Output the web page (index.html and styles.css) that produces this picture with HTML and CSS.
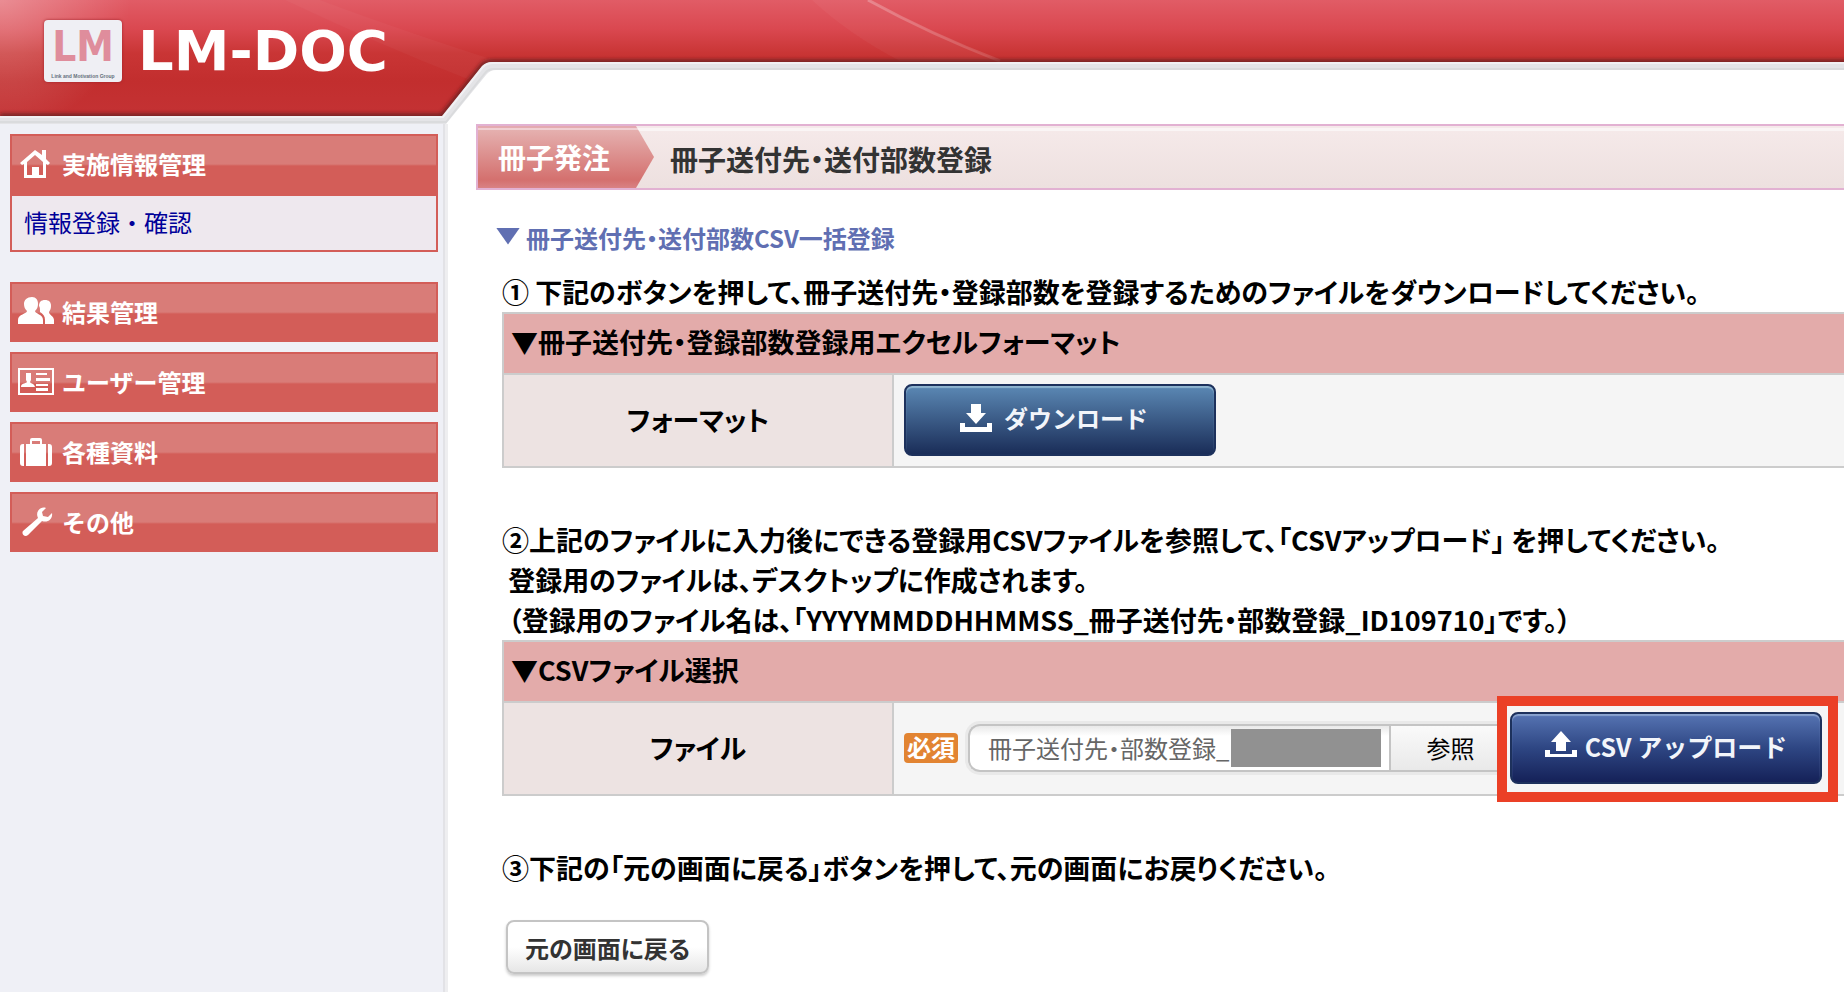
FILE: index.html
```html
<!DOCTYPE html>
<html lang="ja">
<head>
    <meta charset="UTF-8">
    <meta name="viewport" content="width=device-width, initial-scale=1.0">
    <title>冊子送付先・送付部数登録 | LM-DOC</title>
    <link rel="stylesheet" href="styles.css">
</head>
<body>
    <header class="header">
        <svg class="header-bg" aria-hidden="true">
            <defs>
                <linearGradient id="red" x1="0" y1="0" x2="0" y2="116" gradientUnits="userSpaceOnUse">
                    <stop offset="0" stop-color="#e15c66"/>
                    <stop offset="0.25" stop-color="#da4850"/>
                    <stop offset="0.46" stop-color="#c93535"/>
                    <stop offset="0.7" stop-color="#c22e2e"/>
                    <stop offset="1" stop-color="#c43234"/>
                </linearGradient>
                <radialGradient id="shine" cx="0" cy="0" r="130" gradientUnits="userSpaceOnUse">
                    <stop offset="0" stop-color="#fff" stop-opacity="0.3"/>
                    <stop offset="1" stop-color="#fff" stop-opacity="0"/>
                </radialGradient>
                <linearGradient id="streak" x1="868" y1="0" x2="1000" y2="61" gradientUnits="userSpaceOnUse">
                    <stop offset="0" stop-color="#fff" stop-opacity="0.25"/>
                    <stop offset="1" stop-color="#fff" stop-opacity="0.12"/>
                </linearGradient>
                <filter id="soft" x="-5%" y="-20%" width="110%" height="140%">
                    <feGaussianBlur stdDeviation="2"/>
                </filter>
            </defs>
            <rect width="100%" height="124" fill="url(#red)"/>
            <rect width="140" height="124" fill="url(#shine)"/>
            <path d="M285 0Q380 45 470 80L500 62Q400 30 320 0Z" fill="#fff" opacity="0.03"/>
            <path d="M812 0Q850 35 900 61H1000Q930 32 868 0Z" fill="#fff" opacity="0.04"/>
            <path d="M868 0Q930 34 1000 61" fill="none" stroke="url(#streak)" stroke-width="3"/>
            <path d="M0 116H442L482 66Q486 62 492 62H4000" fill="none" stroke="#5c1a1e" stroke-width="4" filter="url(#soft)"/>
            <path d="M0 116H442L482 66Q486 62 492 62H4000V124H0Z" fill="#e4e4e7"/>
            <path d="M0 117H443L483 67Q487 63 493 63H4000" fill="none" stroke="#f1f0f3" stroke-width="2"/>
            <path d="M0 122H446L485 73Q488 69 494 69H4000" fill="none" stroke="#dadbdd" stroke-width="2"/>
            <path d="M446 124L486 75Q490 70 496 70H4000V124Z" fill="#fff"/>
        </svg>
        <a class="logo" href="#">
            <span class="logo-mark">
                <span class="logo-initials">LM</span>
                <span class="logo-caption">Link and Motivation Group</span>
            </span>
            <span class="logo-name">LM-DOC</span>
        </a>
    </header>

    <div class="wrapper">
        <nav class="sidebar">
            <div class="menu-group">
                <a class="menu-title" href="#">
                    <svg class="menu-icon" viewBox="0 0 36 30"><path d="M17 1L2 14l2 2 2-1v14h22V15l2 1 2-2-4-4V1h-4v5ZM17 6l8 7v13h-4v-8h-7v8H9V13Z" fill="#fff" fill-rule="evenodd"/></svg>
                    実施情報管理
                </a>
                <a class="menu-sub" href="#">情報登録・確認</a>
            </div>
            <a class="menu-title" href="#">
                <svg class="menu-icon" viewBox="0 0 36 30"><path d="M14 0c4 0 6 3 6 7 0 3-1 5-3 7 0 3 8 3 8 9v4H0v-4c0-6 9-6 9-9-2-2-3-4-3-7 0-4 3-7 8-7ZM27 3c4 0 6 2 6 6 0 3-1 4-2 6 0 3 5 4 5 8v4h-9v-4c0-4-2-6-5-8 0-3 0-5-1-6 0-4 2-6 6-6Z" fill="#fff"/></svg>
                結果管理
            </a>
            <a class="menu-title" href="#">
                <svg class="menu-icon" viewBox="0 0 36 30"><path d="M1 2h34v25H1Z" fill="none" stroke="#fff" stroke-width="2"/><path d="M8 6h5v7l-1 2c1 2 4 1 5 5H3c0-4 4-3 6-5l-1-2V6ZM18 6h11v2H18Zm0 5h14v3H18Zm0 6h12v2H18Zm0 4h12v3H18Z" fill="#fff"/></svg>
                ユーザー管理
            </a>
            <a class="menu-title" href="#">
                <svg class="menu-icon" viewBox="0 0 36 30"><path d="M8 7h4V3q0-2 2-2h8q2 0 2 2v4h4v22H8ZM14 4v3h8V4ZM6 7v22H5q-3 0-3-3V10q0-3 3-3ZM30 7h1q3 0 3 3v16q0 3-3 3h-1Z" fill="#fff" fill-rule="evenodd"/></svg>
                各種資料
            </a>
            <a class="menu-title" href="#">
                <svg class="menu-icon" viewBox="0 0 36 30"><path d="M28 1c-6-2-11 4-8 10L5 24c-2 3 2 7 5 4l14-14c6 2 11-2 10-8l-4 4-5-1-1-4Z" fill="#fff"/></svg>
                その他
            </a>
        </nav>

        <main class="content">
            <div class="page-title">
                <span class="category">冊子発注</span>
                <h1>冊子送付先・送付部数登録</h1>
            </div>

            <div class="section">
                <h2><span class="triangle"></span>冊子送付先・送付部数CSV一括登録</h2>

                <p>① 下記のボタンを押して、冊子送付先・登録部数を登録するためのファイルをダウンロードしてください。</p>
                <table>
                    <colgroup>
                        <col class="col-label">
                        <col>
                    </colgroup>
                    <tr>
                        <th class="table-title" colspan="2">▼冊子送付先・登録部数登録用エクセルフォーマット</th>
                    </tr>
                    <tr>
                        <th class="label">フォーマット</th>
                        <td>
                            <button type="button" class="btn btn-download">
                                <svg class="btn-icon" viewBox="0 0 32 30"><path d="M11 1h10v9h5L16 21 6 10h5ZM0 20h5v4h22v-4h5v9H0Z" fill="#fff"/></svg>
                                ダウンロード
                            </button>
                        </td>
                    </tr>
                </table>

                <p>②上記のファイルに入力後にできる登録用CSVファイルを参照して、「CSVアップロード」 を押してください。<br>
                &nbsp;登録用のファイルは、デスクトップに作成されます。<br>
                &nbsp;（登録用のファイル名は、「YYYYMMDDHHMMSS_冊子送付先・部数登録_ID109710」です。）</p>
                <table>
                    <colgroup>
                        <col class="col-label">
                        <col>
                    </colgroup>
                    <tr>
                        <th class="table-title" colspan="2">▼CSVファイル選択</th>
                    </tr>
                    <tr>
                        <th class="label"><label for="fileName">ファイル</label></th>
                        <td>
                            <div class="file-row">
                                <span class="required">必須</span>
                                <div class="file-box">
                                    <input type="text" id="fileName" value="冊子送付先・部数登録_" readonly>
                                    <span class="mask"></span>
                                    <button type="button" class="browse">参照</button>
                                </div>
                                <div class="highlight">
                                    <button type="button" class="btn btn-upload">
                                        <svg class="btn-icon" viewBox="0 0 32 30"><path d="M16 0l10 11h-5v9H11v-9H6ZM0 19h5v4h22v-4h5v7H0Z" fill="#fff"/></svg>
                                        CSV アップロード
                                    </button>
                                </div>
                            </div>
                        </td>
                    </tr>
                </table>

                <p>③下記の「元の画面に戻る」ボタンを押して、元の画面にお戻りください。</p>
                <button type="button" class="back">元の画面に戻る</button>
            </div>
        </main>
    </div>
</body>
</html>
```
FILE: styles.css
```css
* {
    box-sizing: border-box;
}

body {
    display: flex;
    flex-direction: column;
    min-height: 100vh;
    margin: 0;
    overflow-x: hidden;
    background-color: #fff;
    color: #000;
    font-family: "Noto Sans CJK JP", sans-serif;
    font-size: 27px;
    line-height: 40px;
}

button, input {
    font-family: inherit;
}

/* ヘッダー */
.header {
    position: relative;
    height: 124px;
}

.header-bg {
    position: absolute;
    top: 0;
    left: 0;
    width: 100%;
    height: 124px;
}

.logo {
    position: relative;
    display: inline-flex;
    align-items: center;
    gap: 16px;
    margin: 20px 0 0 44px;
    text-decoration: none;
}

.logo-mark {
    display: flex;
    flex-direction: column;
    align-items: center;
    justify-content: flex-end;
    width: 78px;
    height: 62px;
    padding-bottom: 2px;
    border-radius: 4px;
    background-color: #efeff4;
    box-shadow: 0 0 3px #a02028;
}

.logo-initials {
    color: #df8d9c;
    font-family: "DejaVu Sans Condensed", "DejaVu Sans", sans-serif;
    font-size: 42px;
    font-weight: bold;
    line-height: 50px;
}

.logo-caption {
    color: #66707c;
    font-family: "Liberation Sans", sans-serif;
    font-size: 5px;
    font-weight: bold;
    line-height: 8px;
}

.logo-name {
    color: #fff;
    font-family: "DejaVu Sans", sans-serif;
    font-size: 56px;
    font-weight: bold;
    line-height: 62px;
}

/* サイドメニュー */
.wrapper {
    display: flex;
    flex: 1;
}

.sidebar {
    display: flex;
    flex-direction: column;
    flex: none;
    gap: 10px;
    width: 448px;
    padding: 10px;
    border-right: 3px solid #eeeef0;
    background-color: #eff0f6;
    box-shadow: inset -2px 0 0 #e2e2e6;
    font-size: 24px;
}

.menu-group {
    margin-bottom: 20px;
}

.menu-title, .menu-sub {
    display: flex;
    align-items: center;
    width: 428px;
    border: 2px solid #d35d58;
    text-decoration: none;
}

.menu-title {
    gap: 8px;
    height: 60px;
    padding-left: 6px;
    background: linear-gradient(#d97c78 28px, #d35d58 30px);
    color: #fff;
    font-weight: bold;
}

.menu-group .menu-title {
    height: 62px;
    padding-bottom: 2px;
}

.menu-sub {
    height: 56px;
    padding: 0 0 2px 12px;
    border-top: none;
    background-color: #eee8ee;
    color: #000099;
}

.menu-icon {
    width: 36px;
    height: 30px;
}

/* コンテンツ */
.content {
    flex: 1;
    min-width: 0;
    padding-left: 28px;
    font-feature-settings: "palt";
}

.page-title {
    display: flex;
    height: 66px;
    border: 2px solid #e2b1d2;
    border-right: none;
    background: linear-gradient(#f5e9ea 2px, #faf5f5 2px, #faf5f5 5px, #f5e9e9 5px, #ede0df);
    font-size: 28px;
}

.category {
    width: 176px;
    padding-left: 20px;
    background: linear-gradient(#e4aab0 2px, #f0cfd2 2px, #f0cfd2 4px, #e5b0af 4px, #d4706e 54px, #d98284);
    clip-path: polygon(0 0, 158px 0, 100% 50%, 158px 100%, 0 100%);
    color: #fff;
    font-weight: bold;
    line-height: 62px;
}

h1 {
    margin: 0 0 0 16px;
    color: #333;
    font-size: 28px;
    font-weight: bold;
    line-height: 66px;
}

.section {
    padding: 28px 0 16px 26px;
}

h2 {
    display: flex;
    align-items: center;
    gap: 6px;
    margin: 0 0 14px -6px;
    color: #606fb2;
    font-size: 24px;
    font-weight: bold;
    line-height: 40px;
}

.triangle {
    width: 24px;
    height: 17px;
    margin-bottom: 4px;
    background-color: #606fb2;
    clip-path: polygon(0 0, 100% 0, 50% 100%);
}

p {
    margin: 0;
    font-weight: bold;
    white-space: nowrap;
}

table {
    width: 100%;
    margin-bottom: 52px;
    border-collapse: collapse;
    table-layout: fixed;
}

.col-label {
    width: 390px;
}

th, td {
    height: 93px;
    padding: 0 10px 2px;
    border: 2px solid #ccc;
    border-right: none;
    background-color: #f5f5f5;
}

.table-title {
    height: 61px;
    padding: 0 8px 4px 7px;
    background-color: #e3abaa;
    text-align: left;
}

.label {
    background-color: #ede3e2;
}

/* ボタン */
.btn {
    display: flex;
    align-items: center;
    justify-content: center;
    width: 312px;
    height: 72px;
    padding: 0 0 4px;
    border: 2px solid #1d315c;
    border-radius: 8px;
    color: #f2f5fa;
    font-size: 24px;
    font-weight: bold;
    cursor: pointer;
}

.btn-download {
    gap: 12px;
    padding-right: 12px;
    background: linear-gradient(#5b88b4, #1a2d58);
    box-shadow: inset 0 2px 1px #8fb5d0;
}

.btn-upload {
    position: relative;
    gap: 8px;
    background: linear-gradient(#5674b3, #2e4683 50%, #152158);
    box-shadow: inset 0 2px 1px #8aa3cf;
    font-size: 25px;
}

.btn-icon {
    flex: none;
    width: 32px;
    height: 30px;
}

.file-row {
    display: flex;
    align-items: center;
}

.required {
    flex: none;
    width: 54px;
    height: 30px;
    border-radius: 4px;
    background-color: #e28432;
    color: #fff;
    font-size: 24px;
    font-weight: bold;
    line-height: 28px;
    text-align: center;
}

.file-box {
    display: flex;
    flex: none;
    align-items: center;
    width: 552px;
    height: 48px;
    margin-left: 10px;
    overflow: hidden;
    border: 2px solid #c4c4c4;
    border-right: none;
    border-radius: 12px 0 0 12px;
    background: linear-gradient(#e9e9e9, #fff 10px);
    box-shadow: 0 0 0 3px #e9e9e9;
}

.file-box input {
    flex: none;
    width: 261px;
    padding: 0 0 0 18px;
    border: none;
    background: none;
    color: #666;
    font-size: 24px;
    font-feature-settings: "palt";
}

.mask {
    flex: none;
    width: 150px;
    height: 38px;
    background-color: #919191;
}

.browse {
    flex: 1;
    align-self: stretch;
    margin-left: 8px;
    padding: 0 10px 0 0;
    border: none;
    border-left: 2px solid #c4c4c4;
    background: linear-gradient(#fafafa, #e9e9e9);
    font-size: 24px;
}

/* 注目させたいボタンの赤枠 */
.highlight {
    position: relative;
    flex: none;
    margin-left: -10px;
}

.highlight::before {
    content: "";
    position: absolute;
    inset: -16px -16px -18px -13px;
    border: 10px solid #eb4026;
    background-color: #f5f5f5;
}

.back {
    height: 54px;
    margin: 32px 0 0 4px;
    padding: 0 17px;
    border: 2px solid #c4c4c4;
    border-radius: 8px;
    background: linear-gradient(#fff 50%, #e6e6e6);
    box-shadow: 0 2px 3px #ccc;
    color: #333;
    font-size: 24px;
    font-weight: bold;
    font-feature-settings: "palt";
}
```
